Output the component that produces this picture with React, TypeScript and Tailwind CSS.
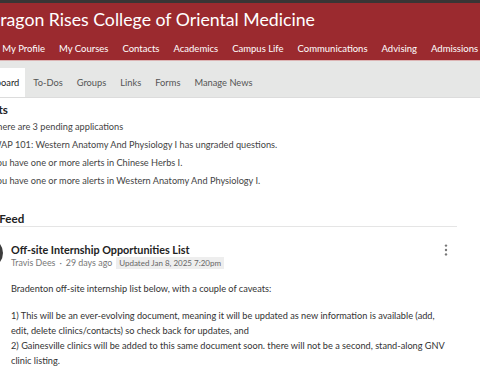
import React from "react";

const nav = ["Home", "My Profile", "My Courses", "Contacts", "Academics", "Campus Life", "Communications", "Advising", "Admissions"];
const tabs = ["To-Dos", "Groups", "Links", "Forms", "Manage News"];
const alerts = [
  "There are 3 pending applications",
  "WAP 101: Western Anatomy And Physiology I has ungraded questions.",
  "You have one or more alerts in Chinese Herbs I.",
  "You have one or more alerts in Western Anatomy And Physiology I.",
];

export default function App() {
  return (
    <div className="w-[480px] h-[380px] overflow-hidden bg-white font-['Lato',sans-serif]">
      <div className="h-[3px] bg-[#3a3535]" />
      <header className="bg-[#9b2a2f] text-white whitespace-nowrap">
        <div className="h-[34px] flex items-center -ml-[13px] text-[17.7px] leading-none">
          Dragon Rises College of Oriental Medicine
        </div>
        <nav className="h-[23px] flex items-center gap-[14px] -ml-[37px] text-[9.5px] leading-none">
          {nav.map((n) => (
            <span key={n}>{n}</span>
          ))}
        </nav>
      </header>
      <div className="h-[1px] bg-[#dcb4b4]" />
      <div className="h-[37px] bg-[#e6e7e6] flex items-end gap-[2px] border-b border-[#dcdcdc] whitespace-nowrap text-[9.3px] text-[#555]">
        <div className="-ml-[31px] h-[29px] px-[6px] bg-white flex items-center text-[#222]">Dashboard</div>
        {tabs.map((t) => (
          <div key={t} className="h-[29px] px-[6px] flex items-center">
            {t}
          </div>
        ))}
      </div>
      <main className="-ml-[23px] mr-[23px] pt-[5px] whitespace-nowrap">
        <h2 className="text-[11.6px] font-bold text-[#222] leading-[14px]">Alerts</h2>
        <ul className="mt-[1px] pl-[15px] text-[9.2px] text-[#444] flex flex-col">
          {alerts.map((a) => (
            <li key={a} className="h-[18px] flex items-center">
              {a}
            </li>
          ))}
        </ul>
        <h2 className="mt-[22px] text-[11.6px] font-bold text-[#222] leading-[14px] border-b border-[#e5e5e5]">
          <span className="-ml-[4px]">Your Feed</span>
        </h2>
        <article className="pt-[16px] -ml-[4px]">
          <div className="flex items-start gap-[8px]">
            <div className="w-[30px] h-[30px] rounded-full bg-[#3c3c3c] -mt-[5px] shrink-0" />
            <div className="flex-1">
              <div className="text-[10.8px] font-bold text-[#222] leading-[13px]">
                Off-site Internship Opportunities List
              </div>
              <div className="flex items-center text-[8.9px] text-[#777] leading-[13px]">
                <span>Travis Dees</span>
                <span className="mx-[4px]">·</span>
                <span>29 days ago</span>
                <span className="ml-[4px] px-[3px] bg-[#eeeeee] text-[#666] text-[8px] leading-[12px]">
                  Updated Jan 8, 2025 7:20pm
                </span>
              </div>
            </div>
            <svg width="4" height="12" viewBox="0 0 4 12" className="mt-[1px] mr-[9px] text-[#777]">
              <circle cx="2" cy="1.6" r="1.2" fill="currentColor" />
              <circle cx="2" cy="6" r="1.2" fill="currentColor" />
              <circle cx="2" cy="10.4" r="1.2" fill="currentColor" />
            </svg>
          </div>
          <div className="pl-[38px] mt-[11.5px] text-[9.2px] text-[#333] leading-[15px] whitespace-normal">
            <div className="w-[440px]">
              <p>Bradenton off-site internship list below, with a couple of caveats:</p>
              <p className="mt-[12px]">
                1) This will be an ever-evolving document, meaning it will be updated as new information is available (add,
                edit, delete clinics/contacts) so check back for updates, and
                <br />
                2) Gainesville clinics will be added to this same document soon. there will not be a second, stand-along GNV
                clinic listing.
              </p>
            </div>
          </div>
        </article>
      </main>
    </div>
  );
}
